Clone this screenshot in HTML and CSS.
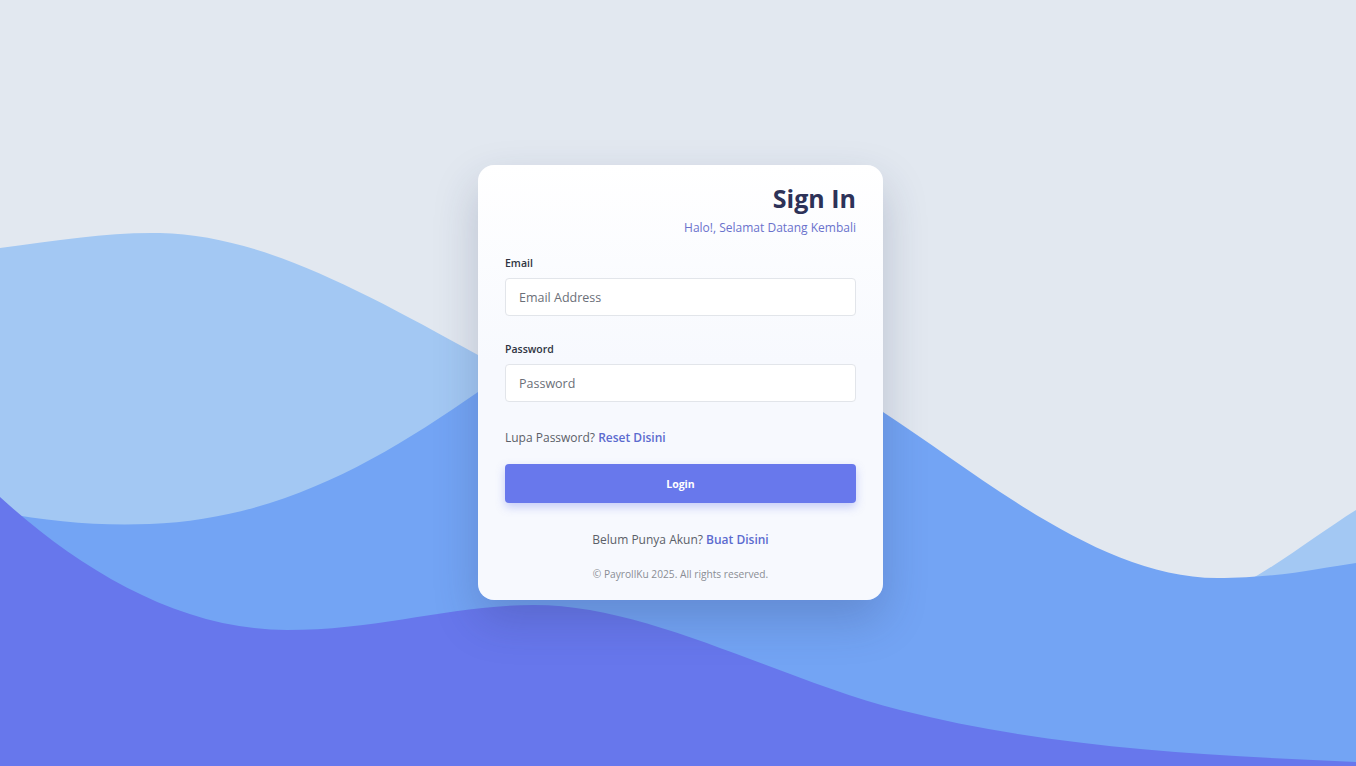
FILE: index.html
```html
<!DOCTYPE html>
<html lang="id">
<head>
<meta charset="utf-8">
<title>Sign In - PayrollKu</title>
<link rel="stylesheet" href="styles.css">
</head>
<body>
<svg class="waves" viewBox="0 0 1356 766" preserveAspectRatio="none" aria-hidden="true">
  <path class="wave-light" d="M0,248 C60,240 110,232 160,233 C260,235 360,290 478,355 C640,450 1000,640 1160,615 C1230,605 1300,545 1356,510 L1356,766 L0,766 Z"/>
  <path class="wave-mid" d="M0,512 C50,522 100,526 150,524 C280,519 380,460 478,392 C570,330 620,310 680,310 C750,310 800,360 883,412 C980,475 1100,578 1217,578 C1280,578 1320,568 1356,563 L1356,766 L0,766 Z"/>
  <path class="wave-deep" d="M0,497 C80,570 180,630 287,630 C380,630 450,605 534,605 C650,605 780,680 900,710 C1050,748 1200,755 1356,762 L1356,766 L0,766 Z"/>
</svg>
<main class="page">
  <section class="card">
    <header class="card-head">
      <h1 class="title">Sign In</h1>
      <p class="subtitle">Halo!, Selamat Datang Kembali</p>
    </header>
    <form class="form">
      <div class="field">
        <label class="label" for="email">Email</label>
        <input class="input" id="email" type="email" placeholder="Email Address">
      </div>
      <div class="field">
        <label class="label" for="password">Password</label>
        <input class="input" id="password" type="password" placeholder="Password">
      </div>
      <p class="forgot">Lupa Password? <a class="link" href="#">Reset Disini</a></p>
      <button class="btn" type="button">Login</button>
    </form>
    <p class="register">Belum Punya Akun? <a class="link" href="#">Buat Disini</a></p>
    <p class="copy">© PayrollKu 2025. All rights reserved.</p>
  </section>
</main>
</body>
</html>
```

FILE: styles.css
```css
* { box-sizing: border-box; }
html, body { margin: 0; height: 100%; }
body {
  background: #e2e8f0;
  font-family: "Open Sans", "Noto Sans", sans-serif;
  color: #444;
  overflow: hidden;
  position: relative;
}
.waves {
  position: absolute;
  left: 0; top: 0;
  width: 100%; height: 100%;
  display: block;
}
.wave-light { fill: #a3c8f3; }
.wave-mid { fill: #73a4f4; }
.wave-deep { fill: #6777ec; }

.page {
  position: relative;
  height: 100%;
  display: flex;
  align-items: center;
  justify-content: center;
  padding-left: 5px;
}
.card {
  width: 405px;
  height: 435px;
  margin-top: -1px;
  border-radius: 16px;
  background: linear-gradient(180deg, #ffffff 0%, #f7f9fe 45%, #f7f9fe 100%);
  box-shadow: 0 20px 45px rgba(40, 50, 90, 0.22);
  padding: 17px 27px 0;
}
.card-head { text-align: right; }
.title {
  margin: 0;
  font-size: 25px;
  line-height: 32px;
  font-weight: 700;
  color: #2d3258;
}
.subtitle {
  margin: 5px 0 0;
  font-size: 12px;
  line-height: 18px;
  color: #6a72cc;
}
.form { margin-top: 18px; }
.field { margin-bottom: 25px; }
.label {
  display: block;
  font-size: 10.5px;
  font-weight: 600;
  color: #2f3442;
  line-height: 16px;
  margin-bottom: 7px;
}
.input {
  display: block;
  width: 100%;
  height: 38px;
  border: 1px solid #e2e5ea;
  border-radius: 4px;
  background: #fff;
  padding: 0 13px;
  font-family: inherit;
  font-size: 12.5px;
  color: #333;
  outline: none;
}
.input::placeholder { color: #6b6f78; }
.forgot {
  margin: 26px 0 16px;
  font-size: 12px;
  line-height: 20px;
  color: #5b5f68;
}
.link {
  color: #5c6bcf;
  font-weight: 600;
  text-decoration: none;
}
.btn {
  display: block;
  width: 100%;
  height: 39px;
  border: 0;
  border-radius: 4px;
  background: #6878ec;
  color: #fff;
  font-family: inherit;
  font-size: 10.5px;
  font-weight: 700;
  box-shadow: 0 4px 10px rgba(103, 119, 236, 0.35);
  cursor: pointer;
}
.register {
  margin: 27px 0 0;
  text-align: center;
  font-size: 12px;
  line-height: 20px;
  color: #5b5f68;
}
.copy {
  margin: 16px 0 0;
  text-align: center;
  font-size: 10.2px;
  line-height: 16px;
  color: #8a8d94;
}
```
